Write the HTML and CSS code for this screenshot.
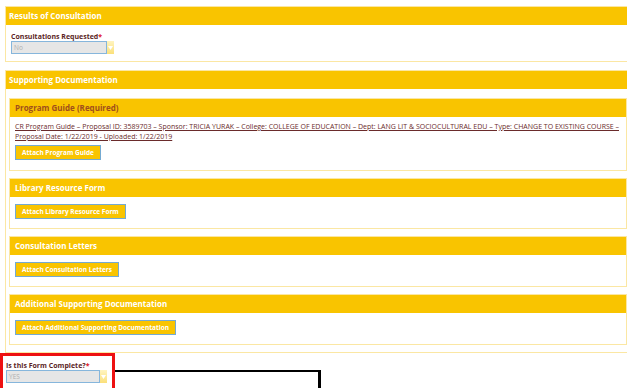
FILE: index.html
```html
<!DOCTYPE html>
<html>
<head>
<meta charset="utf-8">
<link rel="stylesheet" href="styles.css">
</head>
<body>
<div class="page">
  <section class="panel">
    <div class="panel-head">Results of Consultation</div>
    <div class="panel-body first-body">
      <div class="field-label">Consultations Requested<span class="req">*</span></div>
      <div class="select wide">
        <span class="select-value">No</span>
        <span class="select-arrow"><svg width="5" height="4" viewBox="0 0 5 4"><path d="M0 0 L5 0 L2.5 4 Z" fill="#fff"/></svg></span>
      </div>
    </div>
  </section>

  <section class="panel panel-docs">
    <div class="panel-head">Supporting Documentation</div>
    <div class="panel-body docs-body">
      <div class="sub">
        <div class="sub-head required">Program Guide (Required)</div>
        <div class="sub-body guide-body">
          <div class="links"><a class="doc-link">CR Program Guide – Proposal ID: 3589703 – Sponsor: TRICIA YURAK – College: COLLEGE OF EDUCATION – Dept: LANG LIT &amp; SOCIOCULTURAL EDU – Type: CHANGE TO EXISTING COURSE – Proposal Date: 1/22/2019 - Uploaded: 1/22/2019</a></div>
          <button class="attach">Attach Program Guide</button>
        </div>
      </div>
      <div class="sub">
        <div class="sub-head">Library Resource Form</div>
        <div class="sub-body">
          <button class="attach">Attach Library Resource Form</button>
        </div>
      </div>
      <div class="sub">
        <div class="sub-head">Consultation Letters</div>
        <div class="sub-body">
          <button class="attach">Attach Consultation Letters</button>
        </div>
      </div>
      <div class="sub">
        <div class="sub-head">Additional Supporting Documentation</div>
        <div class="sub-body">
          <button class="attach">Attach Additional Supporting Documentation</button>
        </div>
      </div>
    </div>
  </section>

  <div class="complete">
    <div class="field-label">Is this Form Complete?<span class="req">*</span></div>
    <div class="select narrow">
      <span class="select-value">YES</span>
      <span class="select-arrow"><svg width="5" height="4" viewBox="0 0 5 4"><path d="M0 0 L5 0 L2.5 4 Z" fill="#fff"/></svg></span>
    </div>
    <div class="highlight"></div>
    <div class="callout"></div>
  </div>
</div>
</body>
</html>
```

FILE: styles.css
```css
html, body {
  margin: 0;
  padding: 0;
  overflow: hidden;
  background: #ffffff;
}
body {
  width: 627px;
  height: 388px;
  font-family: "Open Sans", "DejaVu Sans", sans-serif;
}
.page {
  padding: 6px 0 0 5px;
  width: 660px;
}
.panel {
  border: 1px solid #fbe7a3;
  width: 640px;
}
.panel-head {
  background: #f9c400;
  color: #ffffff;
  font-weight: bold;
  font-size: 8px;
  height: 18px;
  line-height: 18px;
  padding-left: 3px;
}
.first-body {
  padding: 7px 5px 7px 5px;
}
.field-label {
  color: #5b1f1f;
  font-weight: bold;
  font-size: 7px;
  line-height: 9px;
}
.req {
  color: #e0141e;
}
.select {
  display: flex;
  height: 13px;
}
.select.wide { width: 103px; }
.select.narrow { width: 101px; }
.select-value {
  flex: 1;
  background: #e6e6e6;
  border: 1px solid #86b6dc;
  color: #b0b0b0;
  font-size: 6.5px;
  line-height: 11px;
  padding-left: 2px;
}
.select-arrow {
  width: 7px;
  background: linear-gradient(#fff4c0, #fbe07a);
  display: flex;
  align-items: center;
  justify-content: center;
}
.panel-docs {
  margin-top: 8px;
}
.docs-body {
  padding: 9px 0 7px 3px;
}
.sub {
  border: 1px solid #fbe7a3;
  width: 616px;
  margin-bottom: 7px;
}
.sub:last-child {
  margin-bottom: 0;
}
.sub-head {
  background: #f9c400;
  color: #ffffff;
  font-weight: bold;
  font-size: 8px;
  height: 18px;
  line-height: 18px;
  padding-left: 5px;
}
.sub-head.required {
  color: #a04e1c;
}
.sub-body {
  padding: 7px 5px 9px 5px;
}
.guide-body {
  padding-top: 5px;
  padding-bottom: 10px;
}
.links {
  margin-bottom: 3px;
  font-size: 7px;
  line-height: 10px;
}
.doc-link {
  color: #6a2b2b;
  text-decoration: underline;
}
.attach {
  display: block;
  background: #f9c400;
  border: 1px solid #74aad2;
  color: #ffffff;
  font-family: "Open Sans", "DejaVu Sans", sans-serif;
  font-weight: bold;
  font-size: 6.5px;
  height: 15px;
  padding: 0 6px;
  margin: 0;
}
.complete {
  position: relative;
  padding: 8px 0 0 1px;
}
.highlight {
  position: absolute;
  left: -5px;
  top: 0;
  width: 109px;
  height: 40px;
  border: 3px solid #ee1111;
}
.callout {
  position: absolute;
  left: 110px;
  top: 17px;
  width: 203px;
  height: 40px;
  border-top: 2px solid #000;
  border-right: 3px solid #000;
}
```
